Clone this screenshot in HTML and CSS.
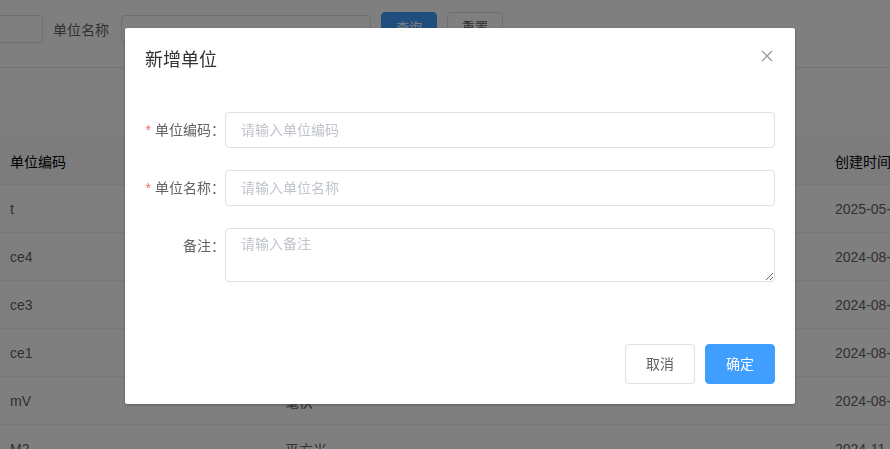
FILE: index.html
```html
<!DOCTYPE html>
<html lang="zh-CN">
<head>
  <meta charset="UTF-8">
  <meta name="viewport" content="width=device-width, initial-scale=1.0">
  <title>计量单位</title>
  <link rel="stylesheet" href="styles.css">
</head>
<body>
  <div class="page">
    <div class="search-bar">
      <input class="search-input first" type="text">
      <label class="search-label">单位名称</label>
      <input class="search-input" type="text">
      <button class="btn btn-primary small">查询</button>
      <button class="btn small">重置</button>
    </div>

    <div class="table">
      <div class="tr th">
        <div class="td">单位编码</div>
        <div class="td">单位名称</div>
        <div class="td">备注</div>
        <div class="td">创建时间</div>
      </div>
      <div class="tr">
        <div class="td">t</div>
        <div class="td">t</div>
        <div class="td"></div>
        <div class="td">2025-05-16</div>
      </div>
      <div class="tr">
        <div class="td">ce4</div>
        <div class="td">测试4</div>
        <div class="td"></div>
        <div class="td">2024-08-22</div>
      </div>
      <div class="tr">
        <div class="td">ce3</div>
        <div class="td">测试3</div>
        <div class="td"></div>
        <div class="td">2024-08-22</div>
      </div>
      <div class="tr">
        <div class="td">ce1</div>
        <div class="td">测试1</div>
        <div class="td"></div>
        <div class="td">2024-08-22</div>
      </div>
      <div class="tr">
        <div class="td">mV</div>
        <div class="td">毫伏</div>
        <div class="td"></div>
        <div class="td">2024-08-14</div>
      </div>
      <div class="tr">
        <div class="td">M2</div>
        <div class="td">平方米</div>
        <div class="td"></div>
        <div class="td">2024-11-05</div>
      </div>
    </div>
  </div>

  <!-- 新增弹窗 -->
  <div class="mask">
    <div class="dialog">
      <div class="dialog-header">
        <span class="dialog-title">新增单位</span>
        <button class="dialog-close" aria-label="关闭">
          <svg width="12" height="12" viewBox="0 0 12 12">
            <path d="M1 1 L11 11 M11 1 L1 11" stroke="#909399" stroke-width="1.2" fill="none"/>
          </svg>
        </button>
      </div>
      <div class="dialog-body">
        <div class="form-item">
          <label class="form-label"><span class="star">*</span>单位编码：</label>
          <input class="form-input" type="text" placeholder="请输入单位编码">
        </div>
        <div class="form-item">
          <label class="form-label"><span class="star">*</span>单位名称：</label>
          <input class="form-input" type="text" placeholder="请输入单位名称">
        </div>
        <div class="form-item">
          <label class="form-label">备注：</label>
          <textarea class="form-textarea" rows="2" placeholder="请输入备注"></textarea>
        </div>
      </div>
      <div class="dialog-footer">
        <button class="btn">取消</button>
        <button class="btn btn-primary">确定</button>
      </div>
    </div>
  </div>
</body>
</html>
```

FILE: styles.css
```css
* {
  margin: 0;
  padding: 0;
  box-sizing: border-box;
}
body {
  font-family: "Liberation Sans", "Noto Sans CJK SC", sans-serif;
  font-size: 14px;
  color: #606266;
  background-color: #fff;
  overflow: hidden;
  width: 890px;
  height: 449px;
}
.page {
  width: 890px;
}
.search-bar {
  display: flex;
  align-items: center;
  height: 68px;
  padding-bottom: 10px;
  border-bottom: 1px solid #e6e6e6;
}
.search-input {
  height: 28px;
  width: 250px;
  border: 1px solid #dcdfe6;
  border-radius: 4px;
  outline: none;
  background: #fff;
}
.search-input.first {
  width: 43px;
  border-left: none;
  border-radius: 0 4px 4px 0;
}
.search-label {
  margin: 0 12px 0 10px;
  color: #606266;
}
.btn {
  font-family: inherit;
  font-size: 14px;
  line-height: 14px;
  padding: 12px 20px;
  border: 1px solid #dcdfe6;
  border-radius: 4px;
  background: #fff;
  color: #606266;
  cursor: pointer;
}
.btn-primary {
  background: #409eff;
  border-color: #409eff;
  color: #fff;
}
.btn.small {
  width: 56px;
  height: 32px;
  padding: 0;
  font-size: 13px;
  margin-left: 10px;
  margin-top: -2px;
}
.table {
  margin-top: 69px;
}
.tr {
  display: grid;
  grid-template-columns: 275px 275px 275px 1fr;
  height: 48px;
  border-bottom: 1px solid #ebeef5;
}
.th {
  background: #f8f8f9;
  color: #000;
}
.td {
  display: flex;
  align-items: center;
  padding-left: 10px;
  white-space: nowrap;
  overflow: hidden;
}
.mask {
  position: fixed;
  top: 0;
  left: 0;
  right: 0;
  bottom: 0;
  background: rgba(0, 0, 0, 0.5);
}
.dialog {
  width: 670px;
  margin: 28px 0 0 125px;
  background: #fff;
  border-radius: 2px;
  box-shadow: 0 1px 3px rgba(0, 0, 0, 0.3);
}
.dialog-header {
  position: relative;
  padding: 20px 20px 10px;
}
.dialog-title {
  font-size: 18px;
  line-height: 24px;
  color: #303133;
}
.dialog-close {
  position: absolute;
  top: 22px;
  right: 22px;
  border: none;
  background: none;
  width: 12px;
  height: 12px;
  display: flex;
  cursor: pointer;
}
.dialog-body {
  padding: 30px 20px 30px 0;
}
.form-item {
  display: flex;
  margin-bottom: 22px;
}
.form-item:last-child {
  margin-bottom: 22px;
}
.form-label {
  width: 100px;
  text-align: right;
  white-space: nowrap;
  line-height: 36px;
  color: #606266;
  flex-shrink: 0;
}
.star {
  color: #f56c6c;
  margin-right: 4px;
}
.form-input {
  flex: 1;
  height: 36px;
  padding: 0 15px;
  border: 1px solid #dcdfe6;
  border-radius: 4px;
  font-family: inherit;
  font-size: 14px;
  color: #606266;
  outline: none;
}
.form-textarea {
  flex: 1;
  height: 54px;
  padding: 5px 15px;
  border: 1px solid #dcdfe6;
  border-radius: 4px;
  font-family: inherit;
  font-size: 14px;
  line-height: 1.5;
  color: #606266;
  outline: none;
  resize: vertical;
}
.form-input::placeholder,
.form-textarea::placeholder {
  color: #c0c4cc;
}
.dialog-footer {
  display: flex;
  justify-content: flex-end;
  gap: 10px;
  padding: 10px 20px 20px;
}
```
